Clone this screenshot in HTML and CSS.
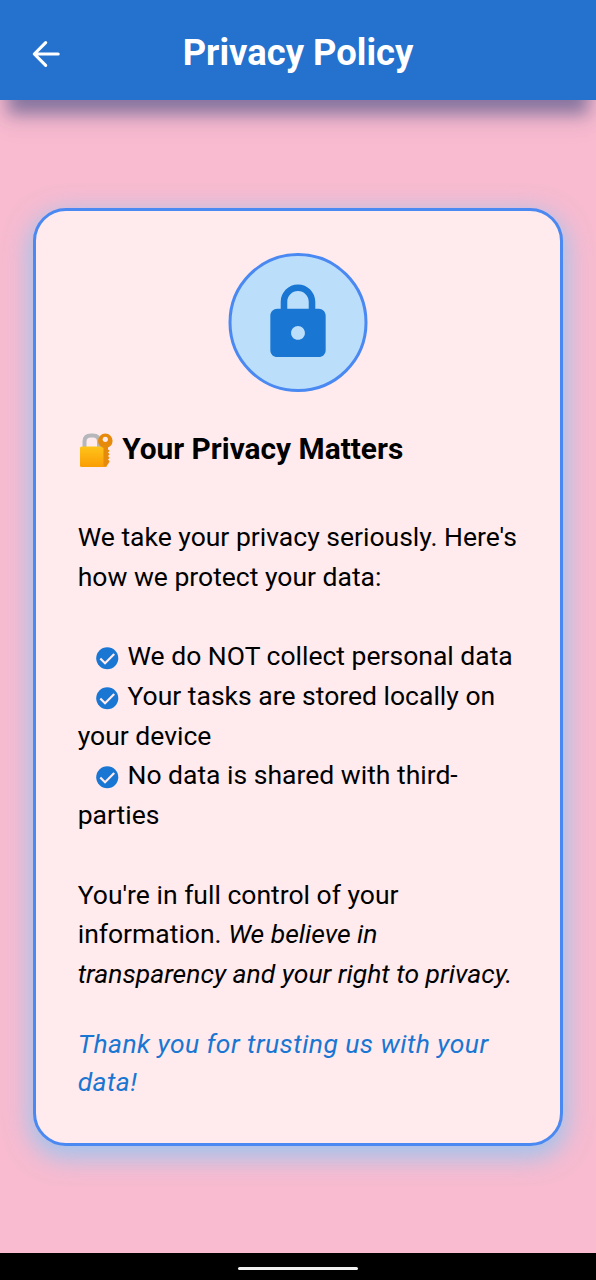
FILE: index.html
```html
<!DOCTYPE html>
<html lang="en">
<head>
<meta charset="utf-8">
<title>Privacy Policy</title>
<link rel="stylesheet" href="styles.css">
</head>
<body>
<svg class="defs" width="0" height="0" aria-hidden="true">
  <symbol id="check" viewBox="0 0 24 24">
    <circle cx="12" cy="12" r="10" fill="#1976d2"/>
    <path d="M5.7 12.2l4.3 4.3 8.3-8.3" fill="none" stroke="#ffebee" stroke-width="2"/>
  </symbol>
</svg>
<header class="app-bar">
  <svg class="back" viewBox="0 0 24 24"><path d="M19.3 12H5M11.8 5.2L5 12l6.8 6.8" fill="none" stroke="#fff" stroke-width="1.9" stroke-linecap="round" stroke-linejoin="round"/></svg>
  <h1 class="title">Privacy Policy</h1>
</header>
<main class="content">
  <article class="card">
    <div class="badge">
      <svg class="lock" viewBox="0 0 24 24"><path fill="#1976d2" d="M18 8h-1V6c0-2.76-2.24-5-5-5S7 3.24 7 6v2H6c-1.1 0-2 .9-2 2v10c0 1.1.9 2 2 2h12c1.1 0 2-.9 2-2V10c0-1.100-.9-2-2-2zm-6 9c-1.100 0-2-.9-2-2s.9-2 2-2 2 .9 2 2-.9 2-2 2zm3.100-9H8.900V6c0-1.710 1.390-3.100 3.100-3.100s3.100 1.390 3.100 3.100z"/></svg>
    </div>
    <h2 class="heading">
      <svg class="emoji" viewBox="0 0 34 35">
        <defs>
          <linearGradient id="body" x1="0" y1="0" x2="0" y2="1"><stop offset="0" stop-color="#ffc41a"/><stop offset="1" stop-color="#fa9d05"/></linearGradient>
        </defs>
        <path d="M5.500 15V8.500Q5.500 2.500 12 2.500h2Q20 2.500 20 8.500V15" fill="none" stroke="#b5b7ba" stroke-width="4"/>
        <rect x="1" y="13.500" width="27" height="20.500" rx="1.500" fill="url(#body)"/>
        <path d="M24.500 11h4.500v5.500l1.700 1.300-1.700 1.700 1.700 1.700-1.700 1.800 1.700 1.700-1.700 1.800 1.700 1.700-1.700 3-2 2h-2.500z" fill="#e68a0b"/>
        <circle cx="26.300" cy="7.900" r="7.300" fill="#e68a0b"/>
        <circle cx="26.300" cy="6.300" r="2.600" fill="#ffebee"/>
      </svg>
      <span>Your Privacy Matters</span>
    </h2>
    <p class="text">We take your privacy seriously. Here's<br>how we protect your data:</p>
    <p class="text"><svg class="check"><use href="#check"/></svg>We do NOT collect personal data<br><svg class="check"><use href="#check"/></svg>Your tasks are stored locally on<br>your device<br><svg class="check"><use href="#check"/></svg>No data is shared with third-<br>parties</p>
    <p class="text">You're in full control of your<br>information. <em>We believe in<br>transparency and your right to privacy.</em></p>
    <p class="thanks">Thank you for trusting us with your<br>data!</p>
  </article>
</main>
<footer class="nav-bar"><div class="handle"></div></footer>
</body>
</html>
```
FILE: styles.css
```css
* { box-sizing: border-box; }
body {
  margin: 0;
  height: 1280px;
  display: flex;
  flex-direction: column;
  overflow: hidden;
  background: #f8bbd0;
  color: #000;
  font-family: Roboto, sans-serif;
}
.defs { position: absolute; }
.app-bar {
  height: 100px;
  display: grid;
  grid-template-columns: 93px 1fr 93px;
  align-items: center;
  padding-top: 7px;
  background: #2471ce;
  box-shadow: 0 22px 16px -8px rgba(50, 67, 125, .54), 0 20px 28px 0 rgba(90, 60, 100, .08);
}
.back { width: 40px; height: 40px; margin-left: 26px; }
.title {
  margin: -1px 0 0;
  text-align: center;
  color: #fff;
  font-size: 36.4px;
  line-height: 46px;
  font-weight: 700;
  white-space: nowrap;
}
.content {
  flex: 1;
  display: flex;
  align-items: center;
  justify-content: center;
}
.card {
  width: 530px;
  height: 938px;
  padding: 42px 41.700px;
  border: 3.300px solid #4a88f2;
  border-radius: 33px;
  background: #ffebee;
  box-shadow: 0 8px 25px 4px rgba(120, 200, 250, .68);
  white-space: nowrap;
}
.badge {
  width: 139px;
  height: 139px;
  margin: 0 auto;
  display: flex;
  align-items: center;
  justify-content: center;
  border: 3.300px solid #4a88f2;
  border-radius: 50%;
  background: #bbdefb;
  transform: translateX(-.5px);
}
.lock { width: 83px; height: 83px; }
.heading {
  display: flex;
  align-items: center;
  gap: 9.500px;
  height: 40px;
  margin: 37px 0 48.300px;
  font-size: 29.850px;
  font-weight: 700;
}
.emoji { width: 34px; height: 35px; margin: 3px 0 0 1px; }
.text {
  margin: 0 0 39.800px;
  font-size: 26.500px;
  line-height: 39.750px;
}
.check {
  width: 26.500px;
  height: 26.500px;
  margin: 0 7px 0 16.300px;
  vertical-align: -6.500px;
}
.thanks {
  margin: -9px 0 0;
  color: #1976d2;
  font-size: 26.500px;
  line-height: 38px;
  font-style: italic;
  letter-spacing: .43px;
}
.nav-bar {
  height: 27px;
  display: flex;
  justify-content: center;
  background: #000;
}
.handle { width: 120px; height: 3px; margin-top: 14px; border-radius: 2px; background: #f2f2f2; }
```
